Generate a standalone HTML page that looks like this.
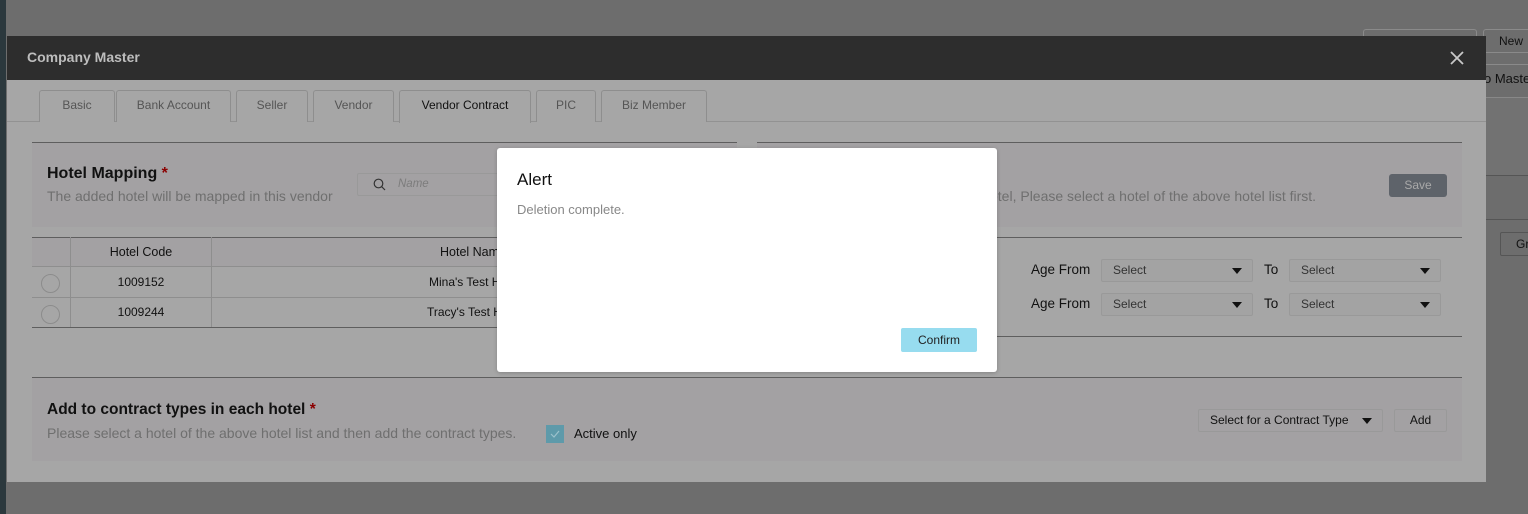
<!DOCTYPE html>
<html><head><meta charset="utf-8"><style>
*{box-sizing:border-box;margin:0;padding:0}
body{width:1528px;height:514px;overflow:hidden;background:#6d6d6d;font-family:"Liberation Sans",sans-serif;position:relative;color:#111}
.a{position:absolute}
.tab{position:absolute;top:90px;height:32px;border:1px solid #8e8e8e;border-bottom:none;border-radius:3px 3px 0 0;font-size:12px;color:#555;text-align:center;line-height:29px;background:#a6a6a6}
.sel{position:absolute;height:23px;border:1px solid #999;border-radius:2px;background:#a3a3a3;font-size:12px;color:#333;padding-left:11px;line-height:21px}
.sel:after{content:"";position:absolute;right:10px;top:8px;border-left:5px solid transparent;border-right:5px solid transparent;border-top:6px solid #111}
.cell{position:absolute;font-size:12px;text-align:center;color:#111}
.radio{position:absolute;left:41px;width:19px;height:19px;border:1px solid #8c8c8c;border-radius:50%}
</style></head><body>
<div class="a" style="left:0;top:0;width:6px;height:514px;background:#2b383d"></div>
<div class="a" style="left:1363px;top:29px;width:114px;height:24px;border:1px solid #8a8a8a;border-radius:3px"></div>
<div class="a" style="left:1483px;top:29px;width:50px;height:24px;border:1px solid #8a8a8a;border-radius:3px;font-size:12px;line-height:22px;padding-left:15px;color:#111">New</div>
<div class="a" style="left:1486px;top:64px;width:42px;height:1px;background:#8a8a8a"></div>
<div class="a" style="left:1484px;top:71px;font-size:13px;color:#111;white-space:nowrap">o Master</div>
<div class="a" style="left:1486px;top:97px;width:42px;height:78px;background:#727272;border-top:1px solid #888"></div>
<div class="a" style="left:1486px;top:175px;width:42px;height:1px;background:#555"></div>
<div class="a" style="left:1486px;top:219px;width:42px;height:1px;background:#555"></div>
<div class="a" style="left:1500px;top:232px;width:40px;height:24px;border:1px solid #555;border-radius:2px;font-size:12px;line-height:22px;padding-left:15px;color:#111">Gr</div>
<div class="a" style="left:7px;top:36px;width:1479px;height:446px;background:#a6a6a6"></div>
<div class="a" style="left:7px;top:36px;width:1479px;height:44px;background:#2d2d2d"></div>
<div class="a" style="left:27px;top:49px;font-size:14px;font-weight:bold;color:#bdbdbd">Company Master</div>
<svg class="a" style="left:1450px;top:51px" width="14" height="14" viewBox="0 0 14 14"><path d="M1 1L13 13M13 1L1 13" stroke="#c8c8c8" stroke-width="1.8"/></svg>
<div class="a" style="left:7px;top:121px;width:1479px;height:1px;background:#929292"></div>
<div class="tab" style="left:39px;width:76px">Basic</div>
<div class="tab" style="left:116px;width:115px">Bank Account</div>
<div class="tab" style="left:236px;width:72px">Seller</div>
<div class="tab" style="left:313px;width:81px">Vendor</div>
<div class="tab" style="left:399px;width:132px;height:33px;color:#111">Vendor Contract</div>
<div class="tab" style="left:536px;width:60px">PIC</div>
<div class="tab" style="left:601px;width:106px">Biz Member</div>
<div class="a" style="left:32px;top:142px;width:705px;height:85px;background:#a3a1a3;border-top:1px solid #5e5e5e"></div>
<div class="a" style="left:47px;top:165px;font-size:16px;font-weight:bold;color:#111">Hotel Mapping <span style="color:#8b0000">*</span></div>
<div class="a" style="left:47px;top:188px;font-size:14px;color:#6f6f6f">The added hotel will be mapped in this vendor</div>
<div class="a" style="left:357px;top:173px;width:150px;height:23px;border:1px solid #999;border-radius:2px"></div>
<svg class="a" style="left:373px;top:178px" width="13" height="13" viewBox="0 0 13 13"><circle cx="5.5" cy="5.5" r="4.3" fill="none" stroke="#333" stroke-width="1.2"/><path d="M8.6 8.6L12 12" stroke="#333" stroke-width="1.2"/></svg>
<div class="a" style="left:398px;top:178px;font-size:11.5px;font-style:italic;color:#7c7c7c">Name</div>
<div class="a" style="left:32px;top:237px;width:705px;height:30px;background:#a3a1a3;border-top:1px solid #5e5e5e;border-bottom:1px solid #8e8e8e"></div>
<div class="a" style="left:32px;top:297px;width:705px;height:1px;background:#8e8e8e"></div>
<div class="a" style="left:32px;top:327px;width:705px;height:1px;background:#5e5e5e"></div>
<div class="a" style="left:70px;top:237px;width:1px;height:90px;background:#8e8e8e"></div>
<div class="a" style="left:211px;top:237px;width:1px;height:90px;background:#8e8e8e"></div>
<div class="cell" style="left:71px;width:140px;top:245px;font-size:12.5px">Hotel Code</div>
<div class="cell" style="left:71px;width:140px;top:275px">1009152</div>
<div class="cell" style="left:71px;width:140px;top:305px">1009244</div>
<div class="a" style="left:440px;top:245px;font-size:12.5px">Hotel Name</div>
<div class="a" style="left:429px;top:275px;font-size:12px">Mina's Test Hotel</div>
<div class="a" style="left:427px;top:305px;font-size:12px">Tracy's Test Hotel</div>
<div class="radio" style="top:274px"></div>
<div class="radio" style="top:305px"></div>
<div class="a" style="left:757px;top:142px;width:705px;height:85px;background:#a3a1a3;border-top:1px solid #5e5e5e"></div>
<div class="a" style="left:990px;top:188px;font-size:14px;color:#6f6f6f">otel, Please select a hotel of the above hotel list first.</div>
<div class="a" style="left:1389px;top:174px;width:58px;height:23px;background:#5e636a;border-radius:3px;font-size:12px;color:#a9a9a9;text-align:center;line-height:23px">Save</div>
<div class="a" style="left:757px;top:237px;width:705px;height:1px;background:#5e5e5e"></div>
<div class="a" style="left:757px;top:336px;width:705px;height:1px;background:#5e5e5e"></div>
<div class="a" style="left:1031px;top:262px;font-size:13.5px">Age From</div>
<div class="a" style="left:1031px;top:296px;font-size:13.5px">Age From</div>
<div class="a" style="left:1264px;top:262px;font-size:13.5px">To</div>
<div class="a" style="left:1264px;top:296px;font-size:13.5px">To</div>
<div class="sel" style="left:1101px;top:259px;width:152px">Select</div>
<div class="sel" style="left:1289px;top:259px;width:152px">Select</div>
<div class="sel" style="left:1101px;top:293px;width:152px">Select</div>
<div class="sel" style="left:1289px;top:293px;width:152px">Select</div>
<div class="a" style="left:32px;top:377px;width:1430px;height:84px;background:#a3a1a3;border-top:1px solid #5e5e5e"></div>
<div class="a" style="left:47px;top:401px;font-size:15.5px;font-weight:bold">Add to contract types in each hotel <span style="color:#8b0000">*</span></div>
<div class="a" style="left:47px;top:425px;font-size:14px;color:#6f6f6f">Please select a hotel of the above hotel list and then add the contract types.</div>
<div class="a" style="left:546px;top:425px;width:18px;height:18px;background:#5e9aaa"></div>
<svg class="a" style="left:549px;top:429px" width="12" height="10" viewBox="0 0 12 10"><path d="M2 5L5 8L10 2" fill="none" stroke="#9cc2cc" stroke-width="1.2"/></svg>
<div class="a" style="left:574px;top:426px;font-size:13px">Active only</div>
<div class="sel" style="left:1198px;top:409px;width:185px;background:#a3a1a3;color:#111">Select for a Contract Type</div>
<div class="a" style="left:1394px;top:409px;width:53px;height:23px;border:1px solid #999;border-radius:2px;font-size:12px;text-align:center;line-height:21px">Add</div>
<div class="a" style="left:497px;top:148px;width:500px;height:224px;background:#fff;border-radius:3px;box-shadow:0 1px 4px rgba(0,0,0,.2)"></div>
<div class="a" style="left:517px;top:170px;font-size:17px;color:#111">Alert</div>
<div class="a" style="left:517px;top:202px;font-size:13px;color:#888">Deletion complete.</div>
<div class="a" style="left:901px;top:328px;width:76px;height:24px;background:#97dcef;border-radius:2px;font-size:12px;text-align:center;line-height:24px;color:#222">Confirm</div>
</body></html>
